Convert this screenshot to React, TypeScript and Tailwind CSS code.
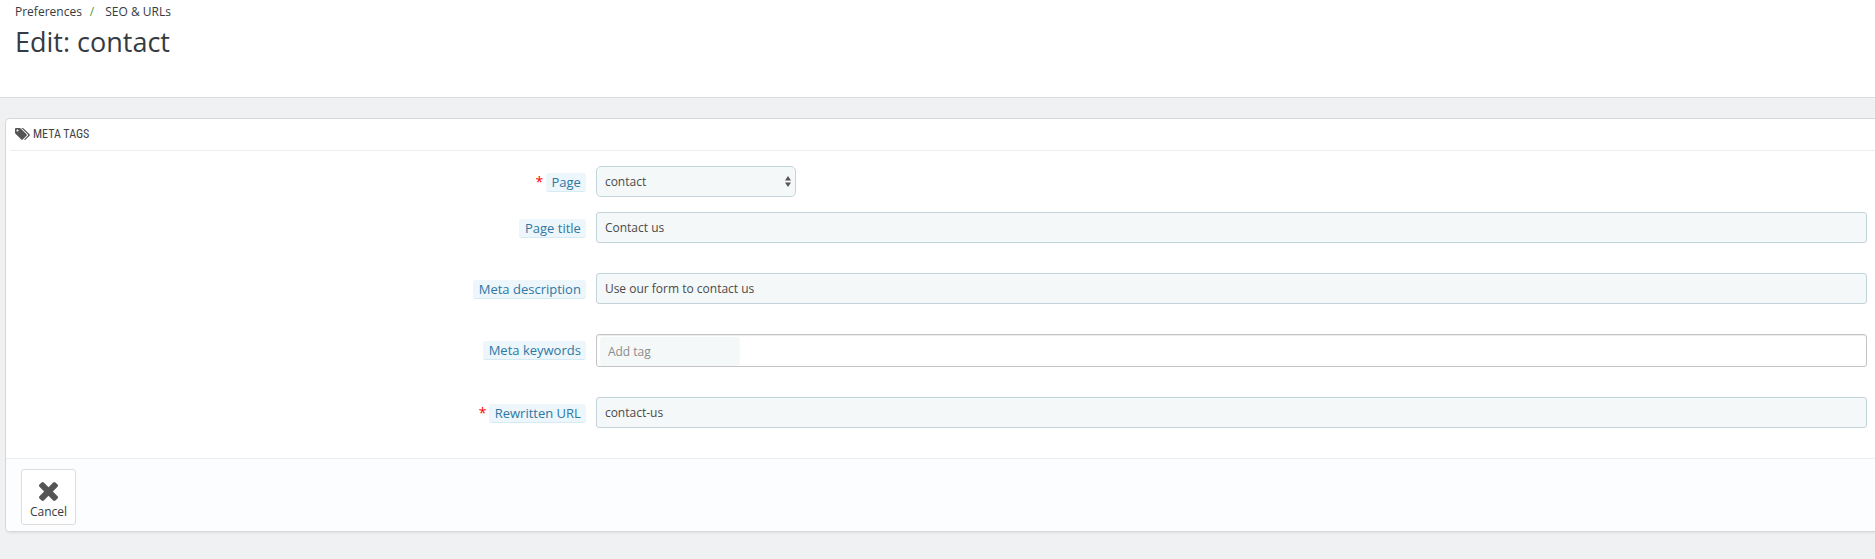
import type { ReactNode } from "react";

const control =
  "block h-[31px] border border-[#c3d4da] bg-[#f4f8f9] px-2 text-xs leading-4 text-[#4a4a4a] outline-none";

function TagsIcon() {
  return (
    <svg viewBox="0 0 1920 1792" className="h-[14px] w-[15px] shrink-0 fill-[#555]" aria-hidden="true">
      <path d="M448 448q0-53-37.5-90.5t-90.5-37.5-90.5 37.5-37.5 90.5 37.5 90.5 90.5 37.5 90.5-37.5 37.5-90.5zm1067 576q0 53-37 90l-491 492q-39 37-91 37-53 0-90-37l-715-716q-38-37-64.5-101t-26.5-117v-416q0-52 38-90t90-38h416q53 0 117 26.5t102 64.5l715 714q37 39 37 91zm384 0q0 53-37 90l-491 492q-39 37-91 37-36 0-59-14t-53-45l470-470q37-37 37-90 0-52-37-91l-715-714q-38-38-102-64.5t-117-26.5h224q53 0 117 26.5t102 64.5l715 714q37 39 37 91z" />
    </svg>
  );
}

function CrossIcon() {
  return (
    <svg viewBox="302 366 1188 1188" className="size-[19px] fill-[#555]" aria-hidden="true">
      <path d="M1490 1322q0 40-28 68l-136 136q-28 28-68 28t-68-28l-294-294-294 294q-28 28-68 28t-68-28l-136-136q-28-28-28-68t28-68l294-294-294-294q-28-28-28-68t28-68l136-136q28-28 68-28t68 28l294 294 294-294q28-28 68-28t68 28l136 136q28 28 28 68t-28 68l-294 294 294 294q28 28 28 68z" />
    </svg>
  );
}

function Field({
  id,
  label,
  required,
  children,
}: {
  id: string;
  label: string;
  required?: boolean;
  children: ReactNode;
}) {
  return (
    <div className="grid grid-cols-[calc(31%+3px)_1fr] items-start gap-[10px]">
      <label htmlFor={id} className="flex items-start justify-end gap-[3px] pt-[7px] text-[13px] leading-[18px]">
        {required && <span className="w-[7px] text-sm leading-[18px] text-[#f00]">*</span>}
        <span className="rounded-[3px] border-b border-[#d5eaf3] bg-[#ecf6fb] pr-[5px] pl-[6px] text-[#2f78a3]">
          {label}
        </span>
      </label>
      <div className="min-w-0">{children}</div>
    </div>
  );
}

export default function App() {
  return (
    <div className="min-h-screen bg-[#eff1f2] pb-7 font-['Open_Sans','Noto_Sans',sans-serif]">
      <header className="h-[98px] border-b border-[#d8dde1] bg-white px-[15px] pt-[3px] text-[#363a41]">
        <nav aria-label="Breadcrumb" className="flex text-xs leading-[18px]">
          <a href="#preferences">Preferences</a>
          <span className="pr-[11px] pl-2 text-[#4a9a50]">/</span>
          <a href="#seo">SEO &amp; URLs</a>
        </nav>
        <h1 className="pt-1 text-[27px] leading-[34px]">Edit: contact</h1>
      </header>

      <form
        className="mt-5 ml-[5px] overflow-hidden rounded-l-[5px] border border-r-0 border-[#d3d8db] bg-white shadow-[0_2px_0_rgba(0,0,0,0.04)]"
        onSubmit={(event) => event.preventDefault()}
      >
        <h2 className="ml-1 flex h-8 items-center gap-[3px] border-b border-[#eee] pb-px pl-[5px] font-['Ubuntu_Condensed','Roboto_Condensed','Open_Sans_Condensed','Noto_Sans_Condensed','Roboto',sans-serif] text-xs leading-5 text-[#444]">
          <TagsIcon />
          META TAGS
        </h2>

        <div className="flex flex-col gap-[30px] pt-[15px] pr-2 pb-[30px]">
          <div className="flex flex-col gap-[15px]">
            <Field id="page" label="Page" required>
              <div className="relative w-[200px] max-w-full">
                <select id="page" defaultValue="contact" className={`${control} w-full appearance-none rounded-[5px]`}>
                  <option value="contact">contact</option>
                </select>
                <svg
                  viewBox="0 0 6 11"
                  className="pointer-events-none absolute top-[10px] right-[5px] h-[11px] w-[6px] fill-[#555]"
                  aria-hidden="true"
                >
                  <path d="M3 0 6 4.5H0zM3 11 0 6.5h6z" />
                </svg>
              </div>
            </Field>
            <Field id="title" label="Page title">
              <input id="title" type="text" defaultValue="Contact us" className={`${control} w-full rounded-[3px]`} />
            </Field>
          </div>
          <Field id="description" label="Meta description">
            <input
              id="description"
              type="text"
              defaultValue="Use our form to contact us"
              className={`${control} w-full rounded-[3px]`}
            />
          </Field>
          <Field id="keywords" label="Meta keywords">
            <div className="flex h-[33px] items-end rounded-[3px] border border-[#c4c4c4] bg-white pl-[3px] shadow-[inset_0_1px_1px_rgba(0,0,0,0.075)]">
              <input
                id="keywords"
                type="text"
                placeholder="Add tag"
                className="h-[29px] w-[140px] rounded-[3px] bg-[#f4f8f9] px-2 text-xs leading-4 outline-none placeholder:text-[#8c8c8c]"
              />
            </div>
          </Field>
          <Field id="url" label="Rewritten URL" required>
            <input id="url" type="text" defaultValue="contact-us" className={`${control} w-full rounded-[3px]`} />
          </Field>
        </div>

        <footer className="border-t border-[#eee] bg-[#fcfdfe] px-[15px] pt-[10px] pb-[6px]">
          <button
            type="button"
            className="flex h-14 w-[55px] flex-col items-center gap-[2px] rounded-[3px] border border-[#ddd] bg-white pt-3 text-xs leading-[18px] text-[#363a41]"
          >
            <CrossIcon />
            Cancel
          </button>
        </footer>
      </form>
    </div>
  );
}
